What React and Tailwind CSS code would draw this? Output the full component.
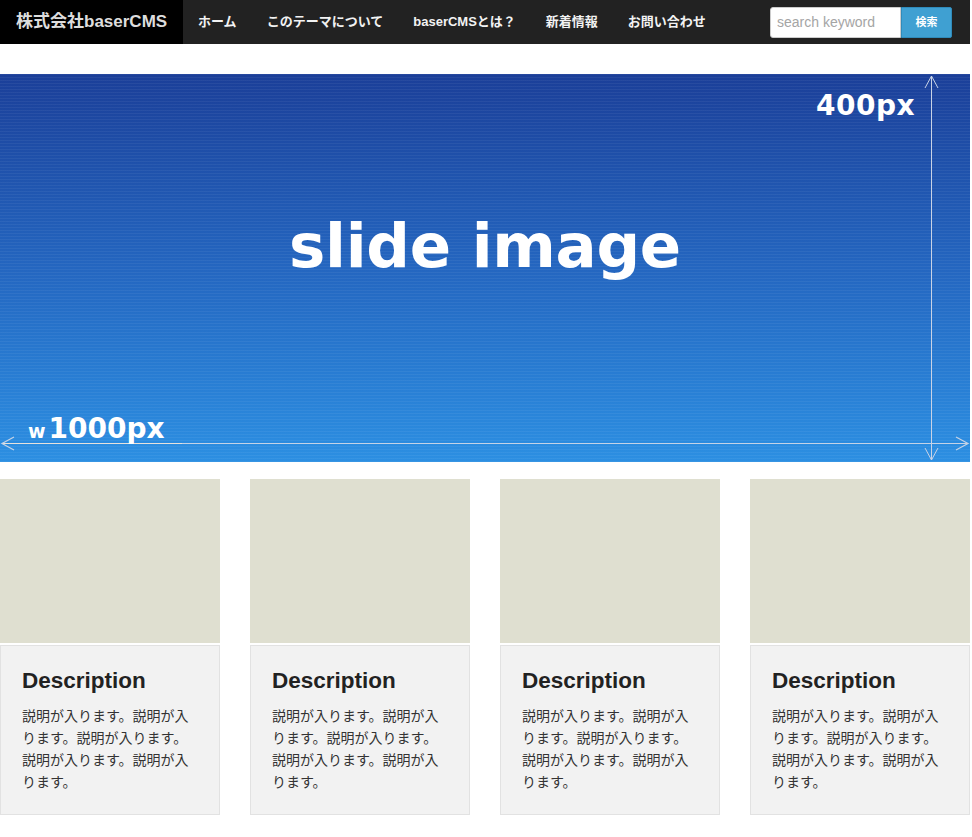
import React from "react";

const NAV = ["ホーム", "このテーマについて", "baserCMSとは？", "新着情報", "お問い合わせ"];
const BODY = "説明が入ります。説明が入ります。説明が入ります。説明が入ります。説明が入ります。";

const SlideArrows = () => (
  <svg className="absolute inset-0" width="970" height="388" viewBox="0 0 970 388" fill="none">
    {/* vertical dimension line */}
    <g stroke="#c9d3e6" strokeWidth="1">
      <line x1="931.5" y1="2" x2="931.5" y2="386" />
      <polyline points="925,14 931.5,2 938,14" />
      <polyline points="925,374 931.5,386 938,374" />
    </g>
    {/* horizontal dimension line */}
    <g strokeWidth="1.2">
      <line x1="2" y1="369.5" x2="182" y2="369.5" stroke="#e8e2dc" />
      <line x1="182" y1="369.5" x2="968" y2="369.5" stroke="#c5d3e6" />
      <polyline points="14,363 2,369.5 14,376" stroke="#c5d3e6" />
      <polyline points="956,363 968,369.5 956,376" stroke="#c5d3e6" />
    </g>
  </svg>
);

const Card = () => (
  <div className="flex flex-col gap-[2px]">
    <div className="h-[164px] bg-[#dfdfd0]" />
    <div className="border border-[#e2e2e2] bg-[#f2f2f2] px-[21px] pt-[23px] pb-[21px]">
      <h3 className="text-[22.5px] font-bold leading-[24px] text-[#222]">Description</h3>
      <p className="mt-[12px] text-[14px] leading-[22px] text-[#333]">{BODY}</p>
    </div>
  </div>
);

export default function App() {
  return (
    <div className="w-[970px] bg-white font-['Liberation_Sans','Noto_Sans_CJK_JP',sans-serif]">
      {/* top bar */}
      <header className="flex h-[44px] items-center bg-[#222]">
        <div className="flex h-full w-[183px] items-center bg-black pl-[16px] text-[17px] font-bold text-[#ddd]">
          株式会社baserCMS
        </div>
        <nav className="flex h-full items-center">
          {NAV.map((n) => (
            <a key={n} className="px-[15px] text-[13px] font-bold text-[#f2f2f2]">
              {n}
            </a>
          ))}
        </nav>
        <form className="ml-auto mr-[18px] flex h-[31px] items-stretch">
          <input
            placeholder="search keyword"
            className="w-[131px] rounded-l-[3px] border border-[#ccc] bg-white px-[6px] text-[14px] text-[#333] outline-none placeholder:text-[#a5a5a5]"
          />
          <button
            type="button"
            className="w-[51px] rounded-r-[2px] border border-[#2f8bbb] bg-[#3fa0d2] text-[11px] font-bold text-white"
          >
            検索
          </button>
        </form>
      </header>

      {/* slide */}
      <section className="mt-[30px]">
        <div className="relative h-[388px] overflow-hidden bg-gradient-to-b from-[#1b3f99] via-[#2466c0] to-[#2c8fe2]">
          <div className="absolute inset-0 bg-[repeating-linear-gradient(180deg,rgba(255,255,255,0.05)_0px,rgba(255,255,255,0.05)_1px,transparent_1px,transparent_3px)]" />
          <SlideArrows />
          <div className="absolute right-[55px] top-[18px] font-['DejaVu_Sans',sans-serif] text-[28px] font-bold leading-none tracking-[0.5px] text-white">
            400px
          </div>
          <div className="absolute inset-x-0 top-[141px] text-center font-['DejaVu_Sans',sans-serif] text-[61px] font-bold leading-none tracking-[-0.3px] text-white">
            slide image
          </div>
          <div className="absolute left-[28px] top-[341px] flex items-baseline font-['DejaVu_Sans',sans-serif] font-bold leading-none text-white">
            <span className="mr-[3px] text-[19px]">w</span>
            <span className="text-[28px]">1000px</span>
          </div>
        </div>
      </section>

      {/* cards */}
      <section className="mt-[17px] grid grid-cols-4 gap-[30px] pb-[40px]">
        <Card />
        <Card />
        <Card />
        <Card />
      </section>
    </div>
  );
}
